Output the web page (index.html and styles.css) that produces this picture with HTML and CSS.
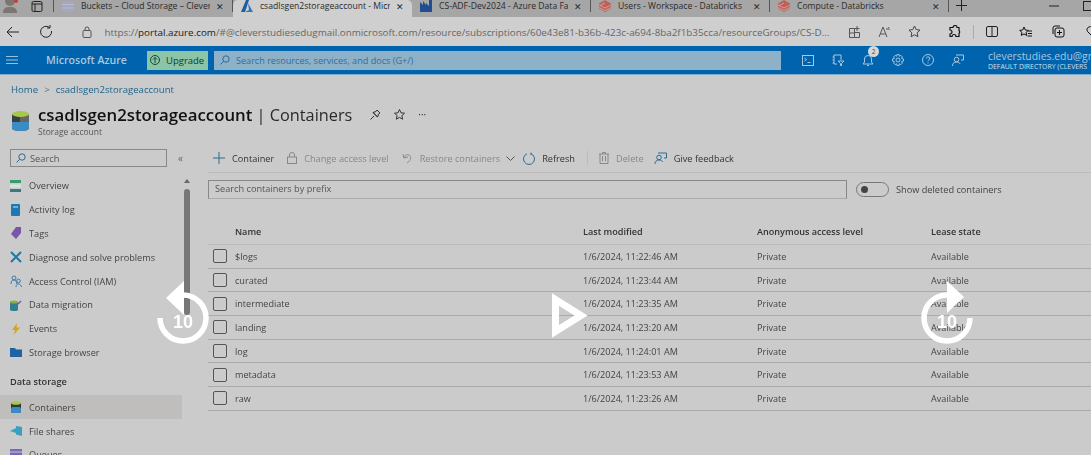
FILE: index.html
```html
<!DOCTYPE html>
<html lang="en">
<head>
<meta charset="UTF-8">
<title>csadlsgen2storageaccount - Containers</title>
<link rel="stylesheet" href="styles.css">
</head>
<body>
<div class="page">

<div class="tabbar">
    <div class="tb-left">
        <svg class="profile" width="16" height="13" viewBox="0 0 16 13"><circle cx="8" cy="1" r="5" fill="#7d7570"/><path d="M1 13c0-5 3-6 7-6s7 1 7 6z" fill="#7d7570"/><circle cx="14" cy="1" r="2" fill="#c4403c"/></svg>
        <svg width="12" height="11" viewBox="0 0 12 11" fill="none" stroke="#222"><rect x="1" y=".5" width="10" height="10" rx="1.500"/><path d="M1 3h10M4 3v7.500"/></svg>
    </div>
    <div class="tab sep">
        <svg class="fav" width="12" height="11" viewBox="0 0 12 11"><rect width="12" height="11" fill="#a3a8c0"/><path d="M0 3.500h12M0 7h12" stroke="#b8bccb"/></svg>
        <span class="tab-name">Buckets – Cloud Storage – Clever</span><span class="tab-x">✕</span>
    </div>
    <div class="tab active">
        <svg class="fav" width="12" height="12" viewBox="0 0 12 12"><path d="M5 0h3L4 12H0z" fill="#1e5f9c"/><path d="M7 3l5 9H4l4-2z" fill="#2a7ab8"/></svg>
        <span class="tab-name">csadlsgen2storageaccount - Micr</span><span class="tab-x">✕</span>
    </div>
    <div class="tab sep">
        <svg class="fav" width="12" height="12" viewBox="0 0 12 12"><path d="M0 12V2l3 3V1l3 4V3l3 3V0h3v12z" fill="#1f4f92"/></svg>
        <span class="tab-name">CS-ADF-Dev2024 - Azure Data Fa</span><span class="tab-x">✕</span>
    </div>
    <div class="tab sep">
        <svg class="fav" width="12" height="12" viewBox="0 0 12 12"><path d="M6 0l6 3.500v5L6 12 0 8.500v-5z" fill="#bf6058"/><path d="M0 5l6 3 6-3M0 7.500l6 3 6-3M6 3L1 5.500" stroke="#cbb" fill="none" stroke-width=".7"/></svg>
        <span class="tab-name">Users - Workspace - Databricks</span><span class="tab-x">✕</span>
    </div>
    <div class="tab sep">
        <svg class="fav" width="12" height="12" viewBox="0 0 12 12"><path d="M6 0l6 3.500v5L6 12 0 8.500v-5z" fill="#bf6058"/><path d="M0 5l6 3 6-3M0 7.500l6 3 6-3M6 3L1 5.500" stroke="#cbb" fill="none" stroke-width=".7"/></svg>
        <span class="tab-name">Compute - Databricks</span><span class="tab-x">✕</span>
    </div>
    <svg class="newtab" width="11" height="11" viewBox="0 0 11 11" stroke="#222"><path d="M5.500 0v11M0 5.500h11"/></svg>
    <div class="win-btns">
        <svg width="10" height="10" viewBox="0 0 10 10" stroke="#222"><path d="M0 5h10"/></svg>
        <svg width="10" height="10" viewBox="0 0 10 10" stroke="#222" fill="none"><rect x=".5" y=".5" width="9" height="9"/></svg>
    </div>
</div>

<div class="addrbar">
    <svg class="a-back" width="13" height="12" viewBox="0 0 13 12" fill="none" stroke="#222"><path d="M13 6H1M6 1L1 6l5 5"/></svg>
    <svg class="a-reload" width="13" height="13" viewBox="0 0 13 13" fill="none" stroke="#222"><path d="M10.500 2.500a5.500 5.500 0 1 0 2 3.500M11 0v3H8"/></svg>
    <svg class="a-lock" width="10" height="12" viewBox="0 0 10 12" fill="none" stroke="#555"><rect x="1" y="4.500" width="8" height="7" rx="1"/><path d="M3 4.500V3a2 2 0 0 1 4 0v1.500"/></svg>
    <div class="url">https://<b>portal.azure.com</b>/#@cleverstudiesedugmail.onmicrosoft.com/resource/subscriptions/60e43e81-b36b-423c-a694-8ba2f1b35cca/resourceGroups/CS-D...</div>
    <div class="a-tools">
        <svg class="t-apps" width="12" height="12" viewBox="0 0 12 12" fill="none" stroke="#555"><path d="M.5 2.500h5v9h-5zM5.500 6.500h5v5h-5zM.5 7h5M8 0v5M5.500 2.500h5"/></svg>
        <svg class="t-read" width="13" height="12" viewBox="0 0 13 12" fill="none" stroke="#555"><path d="M1 11L5 1l4 10M2.500 8h5M10 1a3 3 0 0 1 1 3M8.500 2a2 2 0 0 1 .6 2"/></svg>
        <svg class="t-star" width="13" height="13" viewBox="0 0 13 13" fill="none" stroke="#444"><path d="M6.500 1l1.700 3.600 3.800.5-2.800 2.700.7 3.900-3.400-1.900-3.400 1.900.7-3.900L1 5.100l3.800-.5z"/></svg>
        <svg class="t-ext" width="12" height="13" viewBox="0 0 12 13" fill="none" stroke="#111" stroke-width="1.200"><path d="M4 2.500a2 2 0 0 1 4 0h2v3a2 2 0 0 1 0 3v3H7a2 2 0 0 0-4 0H1V9a2 2 0 0 0 0-4V2.500z"/></svg>
        <span class="t-sep"></span>
        <svg class="t-split" width="12" height="11" viewBox="0 0 12 11" fill="none" stroke="#222"><rect x=".5" y=".5" width="11" height="10" rx="1.500"/><path d="M6 .5v10"/></svg>
        <svg class="t-fav" width="13" height="12" viewBox="0 0 13 12" fill="none" stroke="#111"><path d="M5 1l1.300 3 3 .4-2.200 2 .6 3-2.700-1.500L2.300 9.400l.6-3-2.200-2 3-.4zM9 5h4M9 7.500h4M8.500 10H13"/></svg>
        <svg class="t-coll" width="13" height="13" viewBox="0 0 13 13" fill="none" stroke="#111"><rect x="3" y="3" width="9" height="9" rx="2"/><path d="M1 9V3a2 2 0 0 1 2-2h5M7.500 5v5M5 7.500h5"/></svg>
        <svg class="t-heart" width="13" height="13" viewBox="0 0 13 13" fill="none" stroke="#111"><path d="M6.500 11.500L1.500 6.500a3 3 0 0 1 5-3.500 3 3 0 0 1 5 3.500z"/><circle cx="10" cy="10" r="2.500" fill="#3a8a4e" stroke="none"/></svg>
    </div>
</div>

<div class="azbar">
    <svg class="menu" width="12" height="8" viewBox="0 0 12 8" stroke="#9cc0dc"><path d="M0 .5h12M0 4h12M0 7.500h12"/></svg>
    <span class="brand">Microsoft Azure</span>
    <div class="upgrade">
        <svg width="10" height="10" viewBox="0 0 10 10" fill="none" stroke="#174a34"><circle cx="5" cy="5" r="4.500"/><path d="M5 8V2.500M3 4.500l2-2 2 2"/></svg>
        <span>Upgrade</span>
    </div>
    <div class="az-search">
        <svg width="10" height="10" viewBox="0 0 10 10" fill="none" stroke="#2f6a96"><circle cx="6" cy="4" r="3.200"/><path d="M3.700 6.300L.5 9.500"/></svg>
        <span>Search resources, services, and docs (G+/)</span>
    </div>
    <div class="az-icons">
        <svg width="12" height="11" viewBox="0 0 12 11" fill="none" stroke="#a9c8df"><rect x=".5" y=".5" width="11" height="10"/><path d="M2.500 3l2 1.500-2 1.500M5.500 7.500h3"/></svg>
        <svg width="12" height="12" viewBox="0 0 12 12" fill="none" stroke="#a9c8df"><path d="M2 1h7v5M2 1v9h3M.5 3H2M.5 6H2M.5 9H2M6 7h6L9.500 9.500V12L8.500 11.500V9.500z"/></svg>
        <div class="bell">
            <svg width="12" height="12" viewBox="0 0 12 12" fill="none" stroke="#a9c8df"><path d="M1 10h10L9.500 8V5a3.500 3.500 0 0 0-7 0v3zM5 11.500h2"/></svg>
            <span class="badge">2</span>
        </div>
        <svg width="12" height="12" viewBox="0 0 12 12" fill="none" stroke="#a9c8df"><circle cx="6" cy="6" r="2"/><path d="M5 .5h2l.4 1.700 1.500-.8 1.500 1.500-.8 1.500 1.900.6v2l-1.900.6.800 1.500-1.500 1.500-1.500-.8-.4 1.700H5l-.4-1.700-1.500.8L1.600 9.100l.8-1.500L.5 7V5l1.900-.6-.8-1.500 1.500-1.500 1.500.8z"/></svg>
        <svg width="12" height="12" viewBox="0 0 12 12" fill="none" stroke="#a9c8df"><circle cx="6" cy="6" r="5.500"/><path d="M4.300 4.500a1.700 1.700 0 1 1 2.500 1.500c-.6.400-.8.700-.8 1.300M6 8.500v1"/></svg>
        <svg width="12" height="12" viewBox="0 0 12 12" fill="none" stroke="#a9c8df"><circle cx="4.500" cy="5.500" r="2.300"/><path d="M.5 12c0-2.500 1.500-4 4-4s3 .8 3.500 2M4 1h7.500v5H9"/></svg>
    </div>
    <div class="acct">
        <div class="acct-mail">cleverstudies.edu@gm</div>
        <div class="acct-dir">DEFAULT DIRECTORY (CLEVERS</div>
    </div>
</div>

<nav class="crumbs"><a>Home</a><span class="chev">&gt;</span><a>csadlsgen2storageaccount</a></nav>

<header class="head">
    <svg class="head-ico" width="17" height="20" viewBox="0 0 17 20"><path d="M0 3v14c0 2 3.500 3 8.500 3s8.500-1 8.500-3V3z" fill="#3a3f44"/><path d="M0 11h17v6c0 2-3.500 3-8.500 3S0 19 0 17z" fill="#3c8cc4"/><path d="M8 3h9v8H8z" fill="#666"/><ellipse cx="8.500" cy="3" rx="8.500" ry="3" fill="#a8c84a"/></svg>
    <div>
        <div class="head-line">
            <h1><b>csadlsgen2storageaccount</b> | Containers</h1>
            <svg width="11" height="11" viewBox="0 0 11 11" fill="none" stroke="#333"><path d="M.5 10.500L4 7M3 3.500L7.500 8M3 3.500l3-1L7 1l3 3-1.500 1-.8 3z"/></svg>
            <svg width="11" height="11" viewBox="0 0 11 11" fill="none" stroke="#333"><path d="M5.500.5l1.500 3.300 3.500.4-2.600 2.400.7 3.600-3.100-1.800-3.100 1.800.7-3.600L.5 4.200 4 3.800z"/></svg>
            <span class="dots">···</span>
        </div>
        <div class="head-sub">Storage account</div>
    </div>
</header>

<div class="main">
    <aside class="side">
        <div class="side-top">
            <div class="side-search">
                <svg width="10" height="10" viewBox="0 0 10 10" fill="none" stroke="#2f6a96"><circle cx="6" cy="4" r="3.200"/><path d="M3.700 6.300L.5 9.500"/></svg>
                <span>Search</span>
            </div>
            <span class="collapse">«</span>
        </div>
        <ul class="nav">
            <li><svg width="12" height="12" viewBox="0 0 12 12"><rect width="11" height="3" fill="#3a9a78"/><rect y="4.500" width="11" height="3" fill="#d8e4dc"/><rect y="9" width="11" height="3" fill="#3a7a78"/></svg>Overview</li>
            <li><svg width="12" height="12" viewBox="0 0 12 12"><rect x="1" width="9" height="12" rx="1" fill="#1f78b4"/><path d="M3 3h5" stroke="#cde"/></svg>Activity log</li>
            <li><svg width="12" height="12" viewBox="0 0 12 12"><path d="M6 0h5v6l-5 6-5-5z" fill="#7a55a8"/></svg>Tags</li>
            <li><svg width="12" height="12" viewBox="0 0 12 12" fill="none" stroke="#1f78a8" stroke-width="2"><path d="M1 1l10 10M11 1L1 11"/></svg>Diagnose and solve problems</li>
            <li><svg width="12" height="12" viewBox="0 0 12 12" fill="none" stroke="#3a78a8"><circle cx="4" cy="3" r="2"/><path d="M1 9c0-3 1-4 3-4s2 1 3 4"/><circle cx="8.500" cy="6" r="1.800"/><path d="M6 12c0-2 1-3 2.500-3s2.500 1 3 3"/></svg>Access Control (IAM)</li>
            <li><svg width="12" height="12" viewBox="0 0 12 12"><path d="M0 3v8c0 .6 2 1 4 1s4-.4 4-1V3z" fill="#2f7f90"/><ellipse cx="4" cy="3" rx="4" ry="1.500" fill="#8ab040"/><path d="M8 5l3-3" stroke="#7a55a8" stroke-width="1.500"/></svg>Data migration</li>
            <li><svg width="12" height="12" viewBox="0 0 12 12"><path d="M7 0L2 7h3l-1.500 5L10 4.500H6.500z" fill="#d4a420"/></svg>Events</li>
            <li><svg width="12" height="12" viewBox="0 0 12 12"><path d="M0 2h5l1 1.500h6V11H0z" fill="#1f62a0"/></svg>Storage browser</li>
        </ul>
        <div class="nav-head">Data storage</div>
        <ul class="nav">
            <li class="on"><svg width="12" height="12" viewBox="0 0 12 12"><rect x="1" y="1" width="10" height="11" rx="2" fill="#33383c"/><rect x="1" y="6" width="10" height="6" rx="2" fill="#3c8cc4"/><ellipse cx="6" cy="2" rx="5" ry="1.800" fill="#a8c84a"/></svg>Containers</li>
            <li><svg width="12" height="12" viewBox="0 0 12 12"><path d="M0 6l6-3V1l6 1v9L6 9.500V8z" fill="#38a0c0"/></svg>File shares</li>
            <li><svg width="12" height="12" viewBox="0 0 12 12"><rect width="12" height="12" fill="#7a68b8"/><path d="M0 3h12" stroke="#ccc"/></svg>Queues</li>
        </ul>
        <div class="scroll-track">
            <span class="scroll-up"></span>
            <span class="scroll-thumb"></span>
        </div>
    </aside>

    <section class="content">
        <div class="toolbar">
            <span class="btn"><svg width="12" height="12" viewBox="0 0 12 12" stroke="#2a6a96"><path d="M6 0v12M0 6h12"/></svg>Container</span>
            <span class="btn off"><svg width="10" height="12" viewBox="0 0 10 12" fill="none" stroke="#888"><rect x=".5" y="5" width="9" height="6.500"/><path d="M2.500 5V3a2.500 2.500 0 0 1 5 0v2"/></svg>Change access level</span>
            <span class="btn off r-btn"><svg width="11" height="11" viewBox="0 0 11 11" fill="none" stroke="#888"><path d="M1 1l1 4 4-1M2 5c1-3 3-4 5-3s3 5-2 8"/></svg>Restore containers<svg class="chev-dn" width="9" height="5" viewBox="0 0 9 5" fill="none" stroke="#555"><path d="M.5.500l4 4 4-4"/></svg></span>
            <span class="btn refresh"><svg width="12" height="13" viewBox="0 0 12 13" fill="none" stroke="#2a6a96"><path d="M4 1.800a5.500 5.500 0 1 0 4 0M8 .500v2.500"/></svg>Refresh</span>
            <span class="tool-sep"></span>
            <span class="btn off del"><svg width="10" height="12" viewBox="0 0 10 12" fill="none" stroke="#888"><path d="M0 2h10M3.500 2V.500h3V2M1 2v9.500h8V2M3.500 4v5M6.500 4v5"/></svg>Delete</span>
            <span class="btn"><svg width="13" height="12" viewBox="0 0 13 12" fill="none" stroke="#2a6a96"><circle cx="5" cy="5.500" r="2.300"/><path d="M1 12c0-2.500 1.500-4 4-4s3 .8 3.500 2M4 1h8.500v5H10"/></svg>Give feedback</span>
        </div>
        <div class="filter">
            <div class="prefix">Search containers by prefix</div>
            <span class="toggle"><i></i></span>
            <span class="toggle-txt">Show deleted containers</span>
        </div>
        <div class="tbl">
            <div class="tr th"><span></span><span>Name</span><span>Last modified</span><span>Anonymous access level</span><span>Lease state</span></div>
            <div class="tr"><i class="cb"></i><span>$logs</span><span>1/6/2024, 11:22:46 AM</span><span>Private</span><span>Available</span></div>
            <div class="tr"><i class="cb"></i><span>curated</span><span>1/6/2024, 11:23:44 AM</span><span>Private</span><span>Available</span></div>
            <div class="tr"><i class="cb"></i><span>intermediate</span><span>1/6/2024, 11:23:35 AM</span><span>Private</span><span>Available</span></div>
            <div class="tr"><i class="cb"></i><span>landing</span><span>1/6/2024, 11:23:20 AM</span><span>Private</span><span>Available</span></div>
            <div class="tr"><i class="cb"></i><span>log</span><span>1/6/2024, 11:24:01 AM</span><span>Private</span><span>Available</span></div>
            <div class="tr"><i class="cb"></i><span>metadata</span><span>1/6/2024, 11:23:53 AM</span><span>Private</span><span>Available</span></div>
            <div class="tr"><i class="cb"></i><span>raw</span><span>1/6/2024, 11:23:26 AM</span><span>Private</span><span>Available</span></div>
        </div>
    </section>
</div>
</div>

<!-- video player controls on top of the page -->
<div class="player p-back">
    <svg width="56" height="64" viewBox="0 0 56 64" fill="none"><path d="M28 15a23 23 0 1 1-23 23" stroke="#fff" stroke-width="5.500"/><path d="M29 1v34L11 18z" fill="#fff"/></svg>
    <span>10</span>
</div>
<div class="player p-play">
    <svg width="38" height="46" viewBox="0 0 38 46" fill="none"><path d="M3.500 6.500v32L29 22.500z" stroke="#fff" stroke-width="7"/></svg>
</div>
<div class="player p-fwd">
    <svg width="56" height="64" viewBox="0 0 56 64" fill="none"><path d="M28 15a23 23 0 1 0 23 23" stroke="#fff" stroke-width="5.500"/><path d="M28 1v32l17-16z" fill="#fff"/></svg>
    <span>10</span>
</div>
</body>
</html>
```

FILE: styles.css
```css
html,body{margin:0;height:100%;overflow:hidden;background:#cbcbcb}
body{font-family:"Open Sans","Noto Sans",sans-serif;font-size:9px;color:#333;width:1091px;height:455px;position:relative}
.page{height:455px;overflow:hidden;filter:blur(.35px)}
svg{flex:none;display:block}
ul{list-style:none;margin:0;padding:0}

.tabbar{height:17px;background:#a6a6a6;display:flex;align-items:flex-start;color:#2a2a2a;white-space:nowrap}
.tb-left{width:54px;height:12px;display:flex;align-items:center;gap:13px;padding-left:2px;box-sizing:border-box;border-right:1px solid #555}
.tab{width:179px;height:12px;box-sizing:border-box;display:flex;align-items:center;padding:0 8px;flex:none}
.tab.sep{border-right:1px solid #555}
.tab.active{height:17px;padding-bottom:5px;background:#cfcfcf;border-radius:5px 5px 0 0}
.tab .fav{margin-right:7px}
.tab-name{flex:1;overflow:hidden;font-size:8.600px;line-height:12px}
.tab-x{font-size:9px;margin-left:6px}
.newtab{margin-left:7px}
.win-btns{margin-left:auto;display:flex;gap:24px;margin-right:-2px;margin-top:1px}

.addrbar{height:29px;background:#cfcfcf;display:flex;align-items:center}
.a-back{margin-left:6px}
.a-reload{margin-left:19.500px}
.a-lock{margin-left:30px}
.url{margin-left:13px;width:731px;font-size:9.830px;color:#666;white-space:nowrap;overflow:hidden;flex:none}
.url b{font-weight:400;color:#222}
.a-tools{display:flex;align-items:center;margin-left:13px}
.t-read{margin-left:17.500px}
.t-star{margin-left:17px}
.t-ext{margin-left:27.500px}
.t-sep{width:1px;height:14px;background:#aaa;margin-left:12px}
.t-split{margin-left:12px}
.t-fav{margin-left:21.500px}
.t-coll{margin-left:20px}
.t-heart{margin-left:20.500px}

.azbar{height:28px;background:#0063ae;border-bottom:1px solid #7fa9c8;display:flex;align-items:center;color:#a9c8df;white-space:nowrap;overflow:hidden}
.menu{margin-left:6px}
.brand{margin-left:28px;width:101px;font-size:10.600px;font-weight:600;flex:none}
.upgrade{width:61px;height:19px;background:#8cc4a8;color:#14392a;display:flex;align-items:center;gap:6px;padding-left:3px;box-sizing:border-box;font-size:9.500px;flex:none}
.az-search{margin-left:6px;width:567px;height:19px;background:#8eb1ca;color:#336d96;display:flex;align-items:center;gap:6px;padding-left:6px;box-sizing:border-box;font-size:9.100px;flex:none}
.az-icons{margin-left:21px;display:flex;align-items:center;gap:18px;flex:none}
.bell{position:relative}
.badge{position:absolute;top:-8px;left:6px;width:11px;height:11px;border-radius:50%;background:#d8d8d8;color:#444;font-size:6.500px;line-height:11px;text-align:center}
.acct{margin-left:24px;flex:none;width:103px;overflow:hidden}
.acct-mail{font-size:10.400px;line-height:12px}
.acct-dir{font-size:6.900px;line-height:9px;color:#cfe0ec}

.crumbs{padding:8px 0 0 11px;height:14px;line-height:14px;font-size:9.600px}
.crumbs a{color:#1f6488}
.chev{color:#666;margin:0 6px}

.head{display:flex;align-items:flex-start;padding:5px 0 0 12px;height:44px;box-sizing:border-box}
.head-ico{margin:9px 9px 0 0}
.head-line{display:flex;align-items:center;gap:13px;height:24px}
.head-line h1{margin:0 5px 0 0;font-size:16.300px;font-weight:400;color:#2a2a2a}
.head-line h1 b{font-size:16.800px;font-weight:600;color:#111}
.dots{font-size:10px}
.head-sub{margin-top:1px;font-size:8.500px;color:#555;line-height:9px}

.main{display:flex;margin-top:8px}
.side{width:195px;flex:none;position:relative;height:320px}
.side-top{display:flex;align-items:center;height:18px;padding-left:10px}
.side-search{width:157px;height:18px;box-sizing:border-box;border:1px solid #888;display:flex;align-items:center;gap:4px;padding-left:5px;color:#555;font-size:9.300px}
.collapse{margin-left:11px;color:#666;font-size:10px}
.nav{margin-top:7px}
.nav li{height:23.800px;width:182px;display:flex;align-items:center;gap:7px;padding-left:10px;box-sizing:border-box;font-size:9.200px;color:#444}
.nav-head{margin-top:10px;height:16px;line-height:16px;padding-left:10px;font-weight:600;color:#333;font-size:9.200px}
.nav-head + .nav{margin-top:5px}
.nav .on{background:#c0bebc}
.scroll-track{position:absolute;left:184px;top:30px;width:6px}
.scroll-up{display:block;margin:0 auto;width:0;border:3px solid transparent;border-top:0;border-bottom:4px solid #666}
.scroll-thumb{display:block;margin-top:6px;width:6px;height:126px;background:#777;border-radius:3px}

.content{flex:1;margin-left:13px;min-width:0}
.toolbar{height:18px;padding:0 0 5px 5px;display:flex;align-items:center;border-bottom:1px solid #bbb;color:#333;white-space:nowrap;font-size:9.200px}
.btn{display:flex;align-items:center;gap:7px;margin-right:13px}
.btn.off{color:#888}
.btn.r-btn{margin-right:8px}
.btn.refresh{margin-right:12px}
.btn.del{margin-right:10px}
.chev-dn{margin-left:-1px}
.tool-sep{width:1px;height:14px;background:#bbb;margin-right:11px}
.filter{display:flex;align-items:center;margin-top:7px;height:19px}
.prefix{width:639px;height:19px;box-sizing:border-box;border:1px solid #888;border-bottom-color:#aaa;padding-left:6px;line-height:16px;color:#555;font-size:9.200px}
.toggle{margin-left:9px;width:33px;height:15px;box-sizing:border-box;border:1px solid #777;border-radius:8px;padding:3px 3px;flex:none}
.toggle i{display:block;width:7px;height:7px;margin-left:1px;border-radius:50%;background:#444}
.toggle-txt{margin-left:7px;color:#444;font-size:9.200px}
.tbl{margin-top:19px}
.tr{height:23.700px;box-sizing:border-box;border-bottom:1px solid #aaa;display:grid;grid-template-columns:27px 348px 174px 174px 1fr;align-items:center;font-size:9.100px;color:#444;white-space:nowrap}
.tr.th{height:27px;font-weight:600;color:#333;border-bottom-color:#bbb}
.cb{display:block;width:14px;height:14px;box-sizing:border-box;border:1px solid #555;border-radius:2px;margin-left:5px}

.player{position:absolute;color:#fff}
.player span{position:absolute;left:0;right:0;top:31px;text-align:center;font-size:18px;font-weight:700;font-family:"Liberation Sans",sans-serif;line-height:22px}
.p-back{left:155px;top:280px;width:56px;height:64px}
.p-play{left:552px;top:293px}
.p-fwd{left:919px;top:280px;width:56px;height:64px}
```
